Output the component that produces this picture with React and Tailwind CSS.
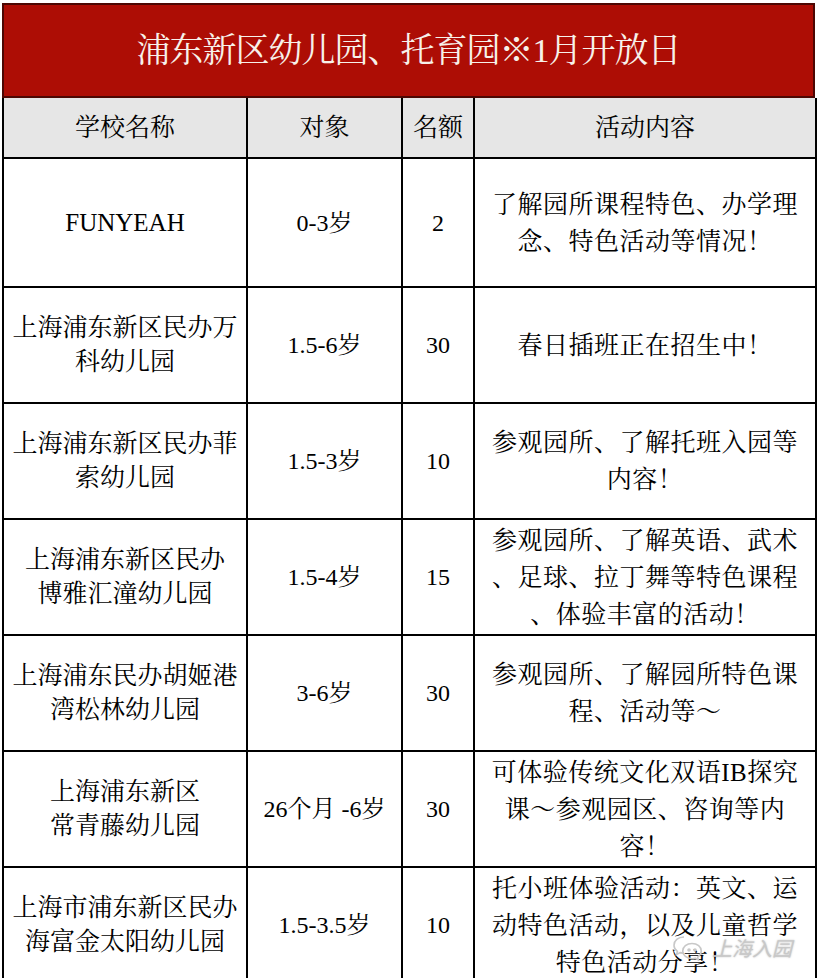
const rows = [
    {
        name: ["FUNYEAH"],
        age: "0-3岁",
        count: "2",
        content: ["了解园所课程特色、办学理", "念、特色活动等情况！"],
        h: "h-[129px]",
    },
    {
        name: ["上海浦东新区民办万", "科幼儿园"],
        age: "1.5-6岁",
        count: "30",
        content: ["春日插班正在招生中！"],
        h: "h-[116px]",
    },
    {
        name: ["上海浦东新区民办菲", "索幼儿园"],
        age: "1.5-3岁",
        count: "10",
        content: ["参观园所、了解托班入园等", "内容！"],
        h: "h-[116px]",
    },
    {
        name: ["上海浦东新区民办", "博雅汇潼幼儿园"],
        age: "1.5-4岁",
        count: "15",
        content: ["参观园所、了解英语、武术", "、足球、拉丁舞等特色课程", "、体验丰富的活动！"],
        h: "h-[116px]",
    },
    {
        name: ["上海浦东民办胡姬港", "湾松林幼儿园"],
        age: "3-6岁",
        count: "30",
        content: ["参观园所、了解园所特色课", "程、活动等～"],
        h: "h-[116px]",
    },
    {
        name: ["上海浦东新区", "常青藤幼儿园"],
        age: "26个月 -6岁",
        count: "30",
        content: ["可体验传统文化双语IB探究", "课～参观园区、咨询等内", "容！"],
        h: "h-[116px]",
    },
    {
        name: ["上海市浦东新区民办", "海富金太阳幼儿园"],
        age: "1.5-3.5岁",
        count: "10",
        content: ["托小班体验活动：英文、运", "动特色活动，以及儿童哲学", "特色活动分享！"],
        h: "h-[116px]",
    },
];

const serif = {
    fontFamily: '"Liberation Serif", "Noto Serif CJK SC", "Noto Sans CJK SC", serif',
};

const App = () => {
    return (
        <div className="h-[978px] w-[817px] overflow-hidden bg-white pl-[2px] pt-[3px] text-black" style={serif}>
            <div className="relative w-[813px]">
                {/* Title bar */}
                <div className="flex h-[95px] items-center justify-center border-2 border-[#4d0703] bg-[#ad0d05]">
                    <h1 className="text-[34px] tracking-[-1px] text-[#f7f1ea]">浦东新区幼儿园、托育园※1月开放日</h1>
                </div>

                <table className="w-[813px] table-fixed border-collapse">
                    <colgroup>
                        <col className="w-[244px]" />
                        <col className="w-[155px]" />
                        <col className="w-[72px]" />
                        <col className="w-[342px]" />
                    </colgroup>
                    <thead>
                        <tr className="h-[60px] bg-[#e6e6e6] text-[25px]">
                            <th className="border-2 border-t-0 border-black font-normal">学校名称</th>
                            <th className="border-2 border-t-0 border-black font-normal">对象</th>
                            <th className="border-2 border-t-0 border-black font-normal">名额</th>
                            <th className="border-2 border-t-0 border-black font-normal">活动内容</th>
                        </tr>
                    </thead>
                    <tbody>
                        {rows.map((row, i) => (
                            <tr key={i} className={row.h}>
                                <td className="border-2 border-black text-center text-[25px] leading-[34px]">
                                    {row.name.map((line, j) => (
                                        <div key={j} className="whitespace-nowrap">
                                            {line}
                                        </div>
                                    ))}
                                </td>
                                <td className="border-2 border-black text-center text-[24px]">{row.age}</td>
                                <td className="border-2 border-black text-center text-[24px]">{row.count}</td>
                                <td className="border-2 border-black text-center text-[25px] leading-[37px] tracking-[0.5px]">
                                    {row.content.map((line, j) => (
                                        <div key={j} className="whitespace-nowrap">
                                            {line}
                                        </div>
                                    ))}
                                </td>
                            </tr>
                        ))}
                    </tbody>
                </table>

                {/* Watermark */}
                <div className="absolute left-[670px] top-[930px] flex items-center gap-[8px] text-[#c8c8c8]">
                    <svg width="32" height="26" viewBox="0 0 32 26" fill="none" stroke="currentColor" strokeWidth="1.6">
                        <path d="M12 2C6 2 2 5.8 2 10.2c0 2.5 1.3 4.6 3.4 6.1L4.6 19.5l3.6-1.9c1.2.3 2.4.5 3.8.5" />
                        <path d="M20 8.5c-5.3 0-9.3 3.4-9.3 7.6s4 7.6 9.3 7.6c1.1 0 2.2-.2 3.2-.5l3.2 1.7-.8-2.8c2-1.4 3.7-3.5 3.7-6 0-4.2-4-7.6-9.3-7.6z" />
                        <circle cx="17" cy="15" r="1" fill="currentColor" />
                        <circle cx="23" cy="15" r="1" fill="currentColor" />
                    </svg>
                    <span className="text-[20px] italic [text-shadow:0_0_2px_rgba(0,0,0,0.25)]" style={{ fontFamily: '"Noto Sans CJK SC", sans-serif' }}>
                        上海入园
                    </span>
                </div>
            </div>
        </div>
    );
};

export default App;
